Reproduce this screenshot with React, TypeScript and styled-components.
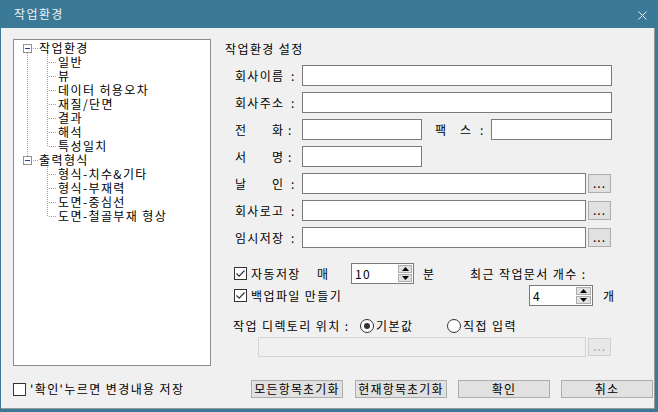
import React from 'react'
import styled, { createGlobalStyle } from 'styled-components'

const GlobalStyle = createGlobalStyle`
  html, body {
    margin: 0;
    padding: 0;
    background: #f0f0f0;
  }
  body {
    font-family: "Noto Sans CJK KR", "Noto Sans", sans-serif;
    font-size: 12px;
    letter-spacing: 1.4px;
    color: #000;
  }
  * {
    box-sizing: border-box;
  }
`

const Window = styled.div`
  width: 658px;
  height: 412px;
  display: flex;
  flex-direction: column;
  border-style: solid;
  border-color: #3a7a96;
  border-width: 0 3px 3px 1px;
  background: #f0f0f0;
`

const TitleBar = styled.div`
  height: 28px;
  flex: none;
  display: flex;
  align-items: center;
  justify-content: space-between;
  padding: 0 8px 0 13px;
  background: #3a7a96;
  color: #eef3f6;
  line-height: 14px;
`

const CloseButton = styled.div`
  width: 9px;
  height: 9px;
  display: flex;
  margin-top: 2px;
`

const Client = styled.div`
  flex: 1;
  display: flex;
  flex-direction: column;
  padding: 11px 1px 10px 12px;
  border-right: 1px solid #9a9a9a;
  border-bottom: 1px solid #9a9a9a;
`

const TopArea = styled.div`
  height: 327px;
  display: flex;
`

const TreeBox = styled.div`
  width: 198px;
  height: 327px;
  flex: none;
  border: 1px solid #8e8e8e;
  background: #fff;
  padding-top: 1px;
`

const TreeRow = styled.div`
  height: 14px;
  display: flex;
  align-items: center;
  line-height: 14px;
  white-space: nowrap;
`

const TreeText = styled.span<{ $gap: number }>`
  margin-left: ${({ $gap }) => $gap}px;
`

const RightPanel = styled.div`
  width: 387px;
  margin-left: 14px;
  display: flex;
  flex-direction: column;
`

const PanelTitle = styled.div`
  margin-top: 2px;
  height: 16px;
  line-height: 16px;
`

const Form = styled.div`
  margin-top: 8px;
  display: flex;
  flex-direction: column;
  gap: 6px;
`

const FormRow = styled.div`
  height: 21px;
  display: flex;
  align-items: center;
  margin-left: 10px;
`

const Label = styled.div<{ $width: number }>`
  width: ${({ $width }) => $width}px;
  flex: none;
  display: flex;
  align-items: center;
  line-height: 14px;
`

const LabelChars = styled.div<{ $width: number }>`
  width: ${({ $width }) => $width}px;
  display: flex;
  justify-content: space-between;
  letter-spacing: 0;
`

const Colon = styled.span<{ $offset: number }>`
  margin-left: ${({ $offset }) => $offset}px;
`

const TextBox = styled.div<{ $width: number }>`
  width: ${({ $width }) => $width}px;
  height: 21px;
  flex: none;
  border: 1px solid #7a7a7a;
  background: #fff;
`

const BrowseButton = styled.div<{ $disabled?: boolean }>`
  width: 23px;
  height: ${({ $disabled }) => ($disabled ? 18 : 19)}px;
  margin-left: 2px;
  flex: none;
  border: 1px solid ${({ $disabled }) => ($disabled ? '#cfcfcf' : '#adadad')};
  background: ${({ $disabled }) => ($disabled ? '#e8e8e8' : '#e1e1e1')};
  color: ${({ $disabled }) => ($disabled ? '#a6a6a6' : '#000')};
  display: flex;
  justify-content: center;
  align-items: flex-end;
  line-height: 12px;
  padding-bottom: 3px;
  letter-spacing: 1px;
`

const Options = styled.div`
  margin-top: 15px;
  margin-left: 9px;
  display: grid;
  grid-template-columns: 83px 34px 63px 56px 1fr;
  grid-auto-rows: 21px;
  row-gap: 1px;
  align-items: center;
  line-height: 14px;
  white-space: nowrap;
`

const CheckLabel = styled.label<{ $span?: string }>`
  display: flex;
  align-items: center;
  gap: 4px;
  grid-column: ${({ $span }) => $span || 'auto'};
  white-space: nowrap;
  line-height: 14px;
`

const CheckBox = styled.span`
  width: 13px;
  height: 13px;
  flex: none;
  border: 1px solid #333;
  background: #fff;
  display: flex;
  align-items: center;
  justify-content: center;
`

const Pad = styled.span<{ $left: number }>`
  padding-left: ${({ $left }) => $left}px;
`

const SpinCell = styled.div`
  display: flex;
  align-items: center;
  padding-left: 59px;
`

const Spin = styled.div<{ $width: number }>`
  width: ${({ $width }) => $width}px;
  height: 21px;
  flex: none;
  border: 1px solid #7a7a7a;
  background: #fff;
  display: flex;
  padding: 1px 1px 1px 0;
`

const SpinValue = styled.div`
  flex: 1;
  padding-left: 3px;
  line-height: 17px;
`

const SpinButtons = styled.div<{ $width: number }>`
  width: ${({ $width }) => $width}px;
  display: flex;
  flex-direction: column;
  gap: 1px;
`

const SpinButton = styled.div`
  flex: 1;
  border: 1px solid #adadad;
  background: #e1e1e1;
  display: flex;
  align-items: center;
  justify-content: center;
`

const Unit = styled.span`
  margin-left: 10px;
`

const DirRow = styled.div`
  margin-top: 10px;
  margin-left: 8px;
  height: 20px;
  display: flex;
  align-items: center;
  line-height: 14px;
`

const DirLabel = styled.span`
  width: 127px;
  flex: none;
  white-space: nowrap;
`

const RadioOption = styled.label<{ $width?: number }>`
  display: flex;
  align-items: center;
  gap: 2px;
  width: ${({ $width }) => ($width ? `${$width}px` : 'auto')};
  white-space: nowrap;
`

const RadioCircle = styled.span<{ $checked?: boolean }>`
  width: 14px;
  height: 14px;
  flex: none;
  border-radius: 50%;
  border: 1px solid #333;
  background: #fff;
  display: flex;
  align-items: center;
  justify-content: center;
  &::after {
    content: '';
    width: 6px;
    height: 6px;
    border-radius: 50%;
    background: ${({ $checked }) => ($checked ? '#333' : 'transparent')};
  }
`

const DisabledRow = styled.div`
  margin-top: 1px;
  margin-left: 33px;
  height: 20px;
  display: flex;
  align-items: center;
`

const DisabledBox = styled.div`
  width: 328px;
  height: 20px;
  border: 1px solid #d4d4d4;
  background: #f0f0f0;
`

const BottomBar = styled.div`
  margin-top: 14px;
  height: 18px;
  display: flex;
  align-items: center;
`

const ButtonGroup = styled.div`
  margin-left: auto;
  display: flex;
  gap: 11px;
`

const PushButton = styled.div`
  width: 92px;
  height: 18px;
  border: 1px solid #adadad;
  background: #e1e1e1;
  display: flex;
  align-items: center;
  justify-content: center;
  line-height: 14px;
  white-space: nowrap;
  letter-spacing: 1.2px;
  &:first-child {
    margin-right: 1px;
  }
`

const DOTS = '#a0a0a0'

const RootConnector = ({ up, down }: { up?: boolean; down?: boolean }) => (
  <svg width="24" height="14" style={{ flex: 'none' }}>
    {up && <line x1="13.5" y1="0" x2="13.5" y2="3" stroke={DOTS} strokeDasharray="1 1" />}
    {down && <line x1="13.5" y1="12" x2="13.5" y2="14" stroke={DOTS} strokeDasharray="1 1" />}
    <rect x="9.5" y="3.5" width="8" height="8" fill="#fff" stroke="#919191" />
    <line x1="11" y1="7.5" x2="16" y2="7.5" stroke="#1f3f8f" />
    <line x1="19" y1="7.5" x2="24" y2="7.5" stroke={DOTS} strokeDasharray="1 1" />
  </svg>
)

const ChildConnector = ({ trunk, last }: { trunk?: boolean; last?: boolean }) => (
  <svg width="43" height="14" style={{ flex: 'none' }}>
    {trunk && <line x1="13.5" y1="0" x2="13.5" y2="14" stroke={DOTS} strokeDasharray="1 1" />}
    <line x1="33.5" y1="0" x2="33.5" y2={last ? 8 : 14} stroke={DOTS} strokeDasharray="1 1" />
    <line x1="35" y1="7.5" x2="43" y2="7.5" stroke={DOTS} strokeDasharray="1 1" />
  </svg>
)

const Check = ({ checked }: { checked?: boolean }) => (
  <CheckBox>
    {checked && (
      <svg width="11" height="11" viewBox="0 0 11 11">
        <path d="M1.5 5.5 L4.2 8.2 L9.5 2.5" fill="none" stroke="#333" strokeWidth="1.2" />
      </svg>
    )}
  </CheckBox>
)

const Arrow = ({ down }: { down?: boolean }) => (
  <svg width="7" height="4" viewBox="0 0 7 4">
    <path d={down ? 'M0 0 H7 L3.5 4 Z' : 'M0 4 H7 L3.5 0 Z'} fill="#000" />
  </svg>
)

const SpinBox = ({ value, width, buttons }: { value: string; width: number; buttons: number }) => (
  <Spin $width={width}>
    <SpinValue>{value}</SpinValue>
    <SpinButtons $width={buttons}>
      <SpinButton>
        <Arrow />
      </SpinButton>
      <SpinButton>
        <Arrow down />
      </SpinButton>
    </SpinButtons>
  </Spin>
)

const tree = [
  { title: '작업환경', items: ['일반', '뷰', '데이터 허용오차', '재질/단면', '결과', '해석', '특성일치'] },
  { title: '출력형식', items: ['형식-치수&기타', '형식-부재력', '도면-중심선', '도면-철골부재 형상'] },
]

const SpacedLabel = ({
  chars,
  width = 67,
  charsWidth = 48,
  colon = 8,
}: {
  chars: string[]
  width?: number
  charsWidth?: number
  colon?: number
}) => (
  <Label $width={width}>
    <LabelChars $width={charsWidth}>
      {chars.map((c, i) => (
        <span key={i}>{c}</span>
      ))}
    </LabelChars>
    <Colon $offset={colon}>:</Colon>
  </Label>
)

export default function App() {
  return (
    <>
      <GlobalStyle />
      <Window>
        <TitleBar>
          <span>작업환경</span>
          <CloseButton>
            <svg width="9" height="9" viewBox="0 0 9 9">
              <path d="M0.5 0.5 L8.5 8.5 M8.5 0.5 L0.5 8.5" stroke="#e8eef2" strokeWidth="1" />
            </svg>
          </CloseButton>
        </TitleBar>
        <Client>
          <TopArea>
            <TreeBox>
              {tree.map((group, gi) => (
                <React.Fragment key={group.title}>
                  <TreeRow>
                    <RootConnector up={gi > 0} down={gi < tree.length - 1} />
                    <TreeText $gap={1}>{group.title}</TreeText>
                  </TreeRow>
                  {group.items.map((item, ii) => (
                    <TreeRow key={item}>
                      <ChildConnector trunk={gi < tree.length - 1} last={ii === group.items.length - 1} />
                      <TreeText $gap={1}>{item}</TreeText>
                    </TreeRow>
                  ))}
                </React.Fragment>
              ))}
            </TreeBox>
            <RightPanel>
              <PanelTitle>작업환경 설정</PanelTitle>
              <Form>
                <FormRow>
                  <SpacedLabel chars={['회', '사', '이', '름']} />
                  <TextBox $width={310} />
                </FormRow>
                <FormRow>
                  <SpacedLabel chars={['회', '사', '주', '소']} />
                  <TextBox $width={310} />
                </FormRow>
                <FormRow>
                  <SpacedLabel chars={['전', '화']} colon={5} />
                  <TextBox $width={120} />
                  <Pad $left={13}>
                    <SpacedLabel chars={['팩', '스']} width={56} charsWidth={36} colon={9} />
                  </Pad>
                  <TextBox $width={121} />
                </FormRow>
                <FormRow>
                  <SpacedLabel chars={['서', '명']} colon={5} />
                  <TextBox $width={120} />
                </FormRow>
                <FormRow>
                  <SpacedLabel chars={['날', '인']} />
                  <TextBox $width={284} />
                  <BrowseButton>...</BrowseButton>
                </FormRow>
                <FormRow>
                  <SpacedLabel chars={['회', '사', '로', '고']} />
                  <TextBox $width={284} />
                  <BrowseButton>...</BrowseButton>
                </FormRow>
                <FormRow>
                  <SpacedLabel chars={['임', '시', '저', '장']} />
                  <TextBox $width={284} />
                  <BrowseButton>...</BrowseButton>
                </FormRow>
              </Form>
              <Options>
                <CheckLabel>
                  <Check checked />
                  자동저장
                </CheckLabel>
                <span>매</span>
                <SpinBox value="10" width={63} buttons={14} />
                <Pad $left={9}>분</Pad>
                <span>최근 작업문서 개수 :</span>
                <CheckLabel $span="1 / 5">
                  <Check checked />
                  백업파일 만들기
                </CheckLabel>
                <SpinCell>
                  <SpinBox value="4" width={64} buttons={15} />
                  <Unit>개</Unit>
                </SpinCell>
              </Options>
              <DirRow>
                <DirLabel>작업 디렉토리 위치 :</DirLabel>
                <RadioOption $width={87}>
                  <RadioCircle $checked />
                  기본값
                </RadioOption>
                <RadioOption>
                  <RadioCircle />
                  직접 입력
                </RadioOption>
              </DirRow>
              <DisabledRow>
                <DisabledBox />
                <BrowseButton $disabled>...</BrowseButton>
              </DisabledRow>
            </RightPanel>
          </TopArea>
          <BottomBar>
            <CheckLabel>
              <Check />
              '확인'누르면 변경내용 저장
            </CheckLabel>
            <ButtonGroup>
              <PushButton>모든항목초기화</PushButton>
              <PushButton>현재항목초기화</PushButton>
              <PushButton>확인</PushButton>
              <PushButton>취소</PushButton>
            </ButtonGroup>
          </BottomBar>
        </Client>
      </Window>
    </>
  )
}
